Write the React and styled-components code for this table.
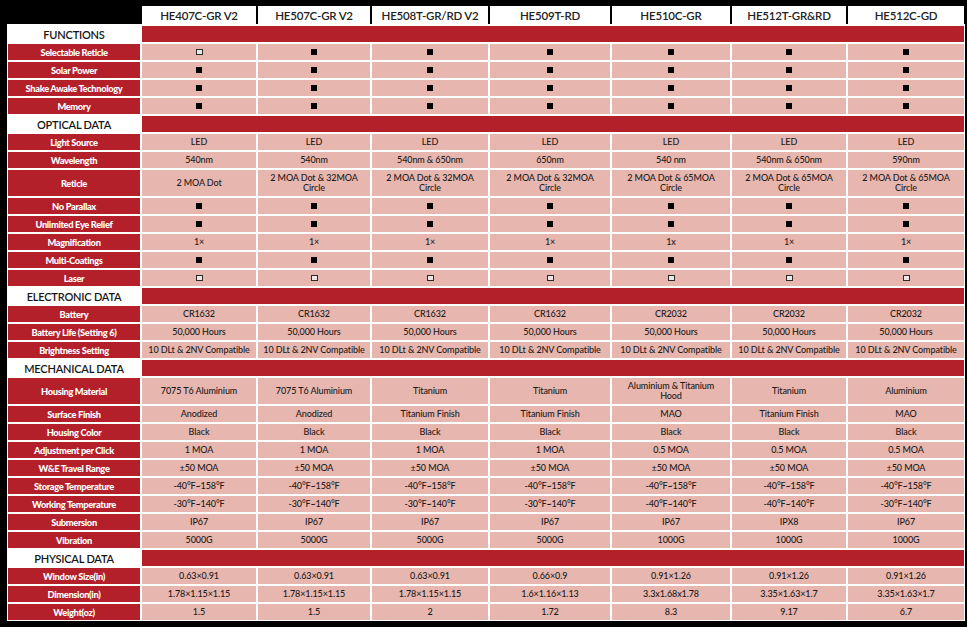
import React from "react";
import styled, { createGlobalStyle } from "styled-components";

const GlobalStyle = createGlobalStyle`
  html, body {
    margin: 0;
    padding: 0;
    background: #000;
  }
  body {
    font-family: Lato, "Liberation Sans", sans-serif;
  }
`;

const COLS = "132px 114px 112px 116px 120px 118px 114px 116px";

const models = [
  "HE407C-GR V2",
  "HE507C-GR V2",
  "HE508T-GR/RD V2",
  "HE509T-RD",
  "HE510C-GR",
  "HE512T-GR&RD",
  "HE512C-GD",
];

const F = "■";
const O = "□";
const all = (v) => Array(7).fill(v);

const sections = [
  {
    title: "FUNCTIONS",
    rows: [
      ["Selectable Reticle", [O, F, F, F, F, F, F]],
      ["Solar Power", all(F)],
      ["Shake Awake Technology", all(F)],
      ["Memory", all(F)],
    ],
  },
  {
    title: "OPTICAL DATA",
    rows: [
      ["Light Source", all("LED")],
      ["Wavelength", ["540nm", "540nm", "540nm & 650nm", "650nm", "540 nm", "540nm & 650nm", "590nm"]],
      [
        "Reticle",
        [
          "2 MOA Dot",
          "2 MOA Dot & 32MOA Circle",
          "2 MOA Dot & 32MOA Circle",
          "2 MOA Dot & 32MOA Circle",
          "2 MOA Dot & 65MOA Circle",
          "2 MOA Dot & 65MOA Circle",
          "2 MOA Dot & 65MOA Circle",
        ],
        true,
      ],
      ["No Parallax", all(F)],
      ["Unlimited Eye Relief", all(F)],
      ["Magnification", ["1×", "1×", "1×", "1×", "1x", "1×", "1×"]],
      ["Multi-Coatings", all(F)],
      ["Laser", all(O)],
    ],
  },
  {
    title: "ELECTRONIC DATA",
    rows: [
      ["Battery", ["CR1632", "CR1632", "CR1632", "CR1632", "CR2032", "CR2032", "CR2032"]],
      ["Battery Life (Setting 6)", all("50,000 Hours")],
      ["Brightness Setting", all("10 DLt & 2NV Compatible")],
    ],
  },
  {
    title: "MECHANICAL DATA",
    rows: [
      [
        "Housing Material",
        ["7075 T6 Aluminium", "7075 T6 Aluminium", "Titanium", "Titanium", "Aluminium & Titanium Hood", "Titanium", "Aluminium"],
        true,
      ],
      ["Surface Finish", ["Anodized", "Anodized", "Titanium Finish", "Titanium Finish", "MAO", "Titanium Finish", "MAO"]],
      ["Housing Color", all("Black")],
      ["Adjustment per Click", ["1 MOA", "1 MOA", "1 MOA", "1 MOA", "0.5 MOA", "0.5 MOA", "0.5 MOA"]],
      ["W&E Travel Range", all("±50 MOA")],
      ["Storage Temperature", all("-40°F~158°F")],
      [
        "Working Temperature",
        ["-30°F~140°F", "-30°F~140°F", "-30°F~140°F", "-30°F~140°F", "-40°F~140°F", "-40°F~140°F", "-30°F~140°F"],
      ],
      ["Submersion", ["IP67", "IP67", "IP67", "IP67", "IP67", "IPX8", "IP67"]],
      ["Vibration", ["5000G", "5000G", "5000G", "5000G", "1000G", "1000G", "1000G"]],
    ],
  },
  {
    title: "PHYSICAL DATA",
    rows: [
      ["Window Size(in)", ["0.63×0.91", "0.63×0.91", "0.63×0.91", "0.66×0.9", "0.91×1.26", "0.91×1.26", "0.91×1.26"]],
      [
        "Dimension(in)",
        ["1.78×1.15×1.15", "1.78×1.15×1.15", "1.78×1.15×1.15", "1.6×1.16×1.13", "3.3x1.68x1.78", "3.35×1.63×1.7", "3.35×1.63×1.7"],
      ],
      ["Weight(oz)", ["1.5", "1.5", "2", "1.72", "8.3", "9.17", "6.7"]],
    ],
  },
];

const Page = styled.div`
  padding: 6px 0 0 7px;
`;

const HeaderRow = styled.div`
  display: grid;
  grid-template-columns: ${COLS};
  column-gap: 2px;
  height: 18px;
  padding: 0 1px;
`;

const HeaderCell = styled.div`
  background: ${(p) => (p.$empty ? "transparent" : "#fff")};
  color: #222;
  font-size: 11.5px;
  font-weight: 600;
  letter-spacing: -0.2px;
  display: flex;
  align-items: center;
  justify-content: center;
`;

const Table = styled.div`
  width: 956px;
  background: #fff;
  padding: 2px 1px 1px;
  display: flex;
  flex-direction: column;
  row-gap: 2px;
`;

const Row = styled.div`
  display: grid;
  grid-template-columns: ${COLS};
  column-gap: 2px;
  height: ${(p) => (p.$tall ? "26px" : "16px")};
`;

const SectionLabel = styled.div`
  background: #fff;
  color: #161616;
  font-size: 11px;
  font-weight: 600;
  letter-spacing: -0.2px;
  display: flex;
  align-items: center;
  justify-content: center;
`;

const SectionBar = styled.div`
  grid-column: 2 / -1;
  background: #b3202a;
`;

const Label = styled.div`
  background: #b3202a;
  color: #fff;
  font-size: 9.3px;
  font-weight: 900;
  letter-spacing: -0.35px;
  display: flex;
  align-items: center;
  justify-content: center;
  white-space: nowrap;
`;

const Cell = styled.div`
  background: #e7b6ae;
  color: #1b1b1b;
  font-size: 9px;
  font-weight: 500;
  letter-spacing: -0.1px;
  line-height: 10px;
  display: flex;
  align-items: center;
  justify-content: center;
  text-align: center;
  padding: 0 ${(p) => (p.$tall ? "12px" : "1px")};
  white-space: ${(p) => (p.$tall ? "normal" : "nowrap")};
`;

const Mark = styled.span`
  display: inline-block;
  width: ${(p) => (p.$hollow ? "5px" : "6px")};
  height: ${(p) => (p.$hollow ? "4px" : "6px")};
  background: ${(p) => (p.$hollow ? "#ece6e4" : "#000")};
  border: ${(p) => (p.$hollow ? "1px solid #2a2a2a" : "none")};
`;

const renderValue = (v) => {
  if (v === F) return <Mark />;
  if (v === O) return <Mark $hollow />;
  return v;
};

export default function App() {
  return (
    <Page>
      <GlobalStyle />
      <HeaderRow>
        <HeaderCell $empty />
        {models.map((m) => (
          <HeaderCell key={m}>{m}</HeaderCell>
        ))}
      </HeaderRow>
      <Table>
        {sections.map((s) => (
          <React.Fragment key={s.title}>
            <Row>
              <SectionLabel>{s.title}</SectionLabel>
              <SectionBar />
            </Row>
            {s.rows.map(([label, values, tall]) => (
              <Row key={label} $tall={tall}>
                <Label>{label}</Label>
                {values.map((v, i) => (
                  <Cell key={i} $tall={tall}>
                    {renderValue(v)}
                  </Cell>
                ))}
              </Row>
            ))}
          </React.Fragment>
        ))}
      </Table>
    </Page>
  );
}
